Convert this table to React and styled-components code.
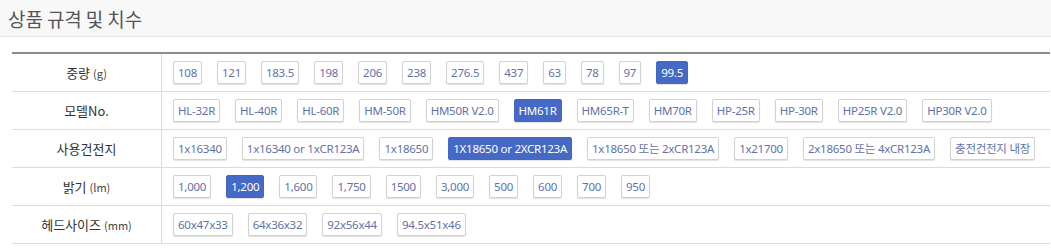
import React from "react";
import styled, { createGlobalStyle } from "styled-components";

const Global = createGlobalStyle`
  html, body { margin: 0; padding: 0; background: #fff; }
  body { font-family: "Noto Sans", "Noto Sans CJK KR", sans-serif; }
`;

const Page = styled.div`
  width: 1051px;
`;

const Header = styled.div`
  height: 36px;
  background: #f8f8f8;
  border-bottom: 1px solid #e6e6e6;
  display: flex;
  align-items: center;
  padding-left: 8px;
`;

const Title = styled.h2`
  margin: 0;
  font-family: "Noto Sans CJK KR", sans-serif;
  font-size: 19px;
  font-weight: 400;
  color: #555;
  letter-spacing: -0.1px;
`;

const Table = styled.div`
  margin: 15px 1px 0 12px;
  border-top: 2px solid #8c8c8c;
`;

const Row = styled.div`
  display: grid;
  grid-template-columns: 150px 1fr;
  border-bottom: 1px solid #dcdcdc;
  height: 37px;
`;

const Label = styled.div`
  display: flex;
  align-items: center;
  justify-content: center;
  border-right: 1px solid #dcdcdc;
  font-family: "Noto Sans CJK KR", sans-serif;
  font-size: 13px;
  color: #333;
  gap: 3px;
`;

const Unit = styled.span`
  font-size: 11px;
  color: #444;
`;

const Values = styled.div`
  display: flex;
  align-items: center;
  flex-wrap: nowrap;
  gap: 15px;
  padding: 0 0 0 11px;
  min-width: 0;
`;

const Chip = styled.span`
  display: inline-block;
  flex: none;
  font-family: "Noto Sans", "Noto Sans CJK KR", sans-serif;
  font-size: 11.5px;
  line-height: 15px;
  padding: 3px 4px;
  border: 1px solid ${(p) => (p.$active ? "#4467c4" : "#d2d2d2")};
  border-radius: 2px;
  background: ${(p) => (p.$active ? "#4669c6" : "#fff")};
  color: ${(p) => (p.$active ? "#fff" : "#5f72a8")};
  box-shadow: 0 1px 1px rgba(0, 0, 0, 0.12);
  white-space: nowrap;
  letter-spacing: -0.25px;
`;

const rows = [
  {
    label: "중량",
    unit: "(g)",
    values: ["108", "121", "183.5", "198", "206", "238", "276.5", "437", "63", "78", "97", "99.5"],
    active: "99.5",
  },
  {
    label: "모델No.",
    values: ["HL-32R", "HL-40R", "HL-60R", "HM-50R", "HM50R V2.0", "HM61R", "HM65R-T", "HM70R", "HP-25R", "HP-30R", "HP25R V2.0", "HP30R V2.0"],
    active: "HM61R",
  },
  {
    label: "사용건전지",
    values: ["1x16340", "1x16340 or 1xCR123A", "1x18650", "1X18650 or 2XCR123A", "1x18650 또는 2xCR123A", "1x21700", "2x18650 또는 4xCR123A", "충전건전지 내장"],
    active: "1X18650 or 2XCR123A",
  },
  {
    label: "밝기",
    unit: "(lm)",
    values: ["1,000", "1,200", "1,600", "1,750", "1500", "3,000", "500", "600", "700", "950"],
    active: "1,200",
  },
  {
    label: "헤드사이즈",
    unit: "(mm)",
    values: ["60x47x33", "64x36x32", "92x56x44", "94.5x51x46"],
    active: null,
  },
];

export default function App() {
  return (
    <Page>
      <Global />
      <Header>
        <Title>상품 규격 및 치수</Title>
      </Header>
      <Table>
        {rows.map((r) => (
          <Row key={r.label}>
            <Label>
              {r.label}
              {r.unit && <Unit>{r.unit}</Unit>}
            </Label>
            <Values>
              {r.values.map((v) => (
                <Chip key={v} $active={v === r.active}>
                  {v}
                </Chip>
              ))}
            </Values>
          </Row>
        ))}
      </Table>
    </Page>
  );
}
